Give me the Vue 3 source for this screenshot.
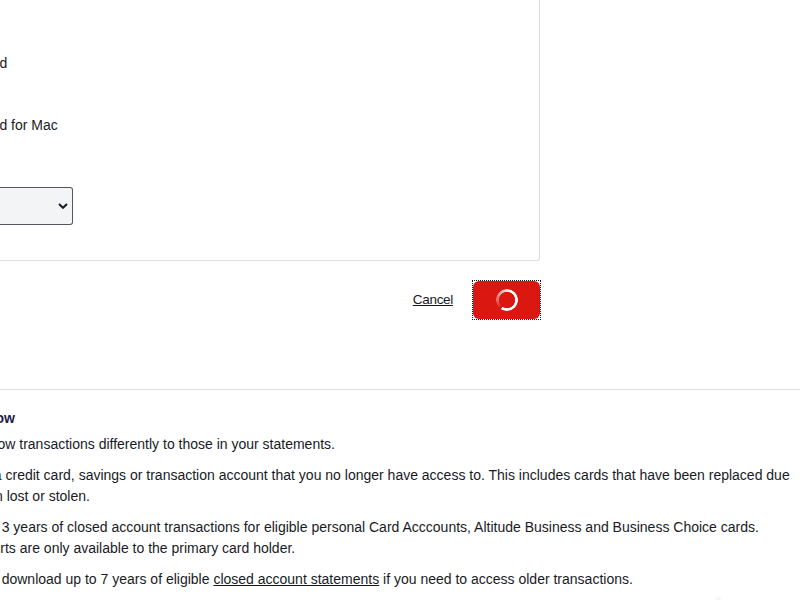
<script setup>
const notes = [
  { lines: [{ text: 'ow transactions differently to those in your statements.', shift: -2.5 }] },
  {
    lines: [
      { text: 'a credit card, savings or transaction account that you no longer have access to. This includes cards that have been replaced due', shift: -6.2 },
      { text: 'n lost or stolen.', shift: -5 },
    ],
  },
  {
    lines: [
      { text: '3 years of closed account transactions for eligible personal Card Acccounts, Altitude Business and Business Choice cards.', shift: 1.7 },
      { text: 'rts are only available to the primary card holder.', shift: 0.3 },
    ],
  },
  {
    lines: [
      { text: 'download up to 7 years of eligible ', link: 'closed account statements', after: ' if you need to access older transactions.', shift: 1.7 },
    ],
  },
]
</script>

<template>
  <div class="page">
    <section class="panel">
      <div class="option">d</div>
      <div class="option">d for Mac</div>
      <div class="select">
        <svg class="chevron" viewBox="0 0 10 6" width="10" height="6">
          <path d="M1 1 L5 4.8 L9 1" fill="none" stroke="#181b25" stroke-width="2" />
        </svg>
      </div>
    </section>
    <div class="actions">
      <a class="cancel">Cancel</a>
      <div class="focus">
        <button class="submit" aria-label="Loading"><span class="spinner"></span></button>
      </div>
    </div>
    <section class="notes">
      <h2>ow</h2>
      <p v-for="(note, i) in notes" :key="i">
        <span v-for="(line, j) in note.lines" :key="j" class="line" :style="{ marginLeft: line.shift + 'px' }">{{ line.text }}<a v-if="line.link">{{ line.link }}</a>{{ line.after }}</span>
      </p>
    </section>
    <div class="shade"></div>
  </div>
</template>

<style>
body { background: #fff; overflow: hidden; }
</style>

<style scoped>
.page {
  position: relative;
  width: 800px;
  height: 600px;
  overflow: hidden;
  box-sizing: border-box;
  font: 14px/21px "Liberation Sans", Arial, sans-serif;
  color: #181b25;
}
.panel {
  box-sizing: border-box;
  width: 540px;
  height: 261px;
  padding-top: 53px;
  border-right: 1px solid #dedede;
  border-bottom: 1px solid #dedede;
  border-bottom-right-radius: 3px;
}
.option { height: 21px; margin-bottom: 41px; margin-left: -0.6px; white-space: nowrap; }
.select {
  display: flex;
  align-items: center;
  justify-content: flex-end;
  box-sizing: border-box;
  width: 73px;
  height: 38px;
  margin-top: 10px;
  padding-right: 4px;
  background: #f3f4f6;
  border: 1px solid #575361;
  border-left: 0;
  border-radius: 0 3px 3px 0;
}
.option + .option { margin-bottom: 0; }
.option + .select { margin-top: 51px; }
.actions {
  display: flex;
  justify-content: flex-end;
  align-items: center;
  gap: 19px;
  width: 541px;
  height: 40px;
  margin-top: 19px;
}
.cancel { font-size: 13.5px; letter-spacing: -0.3px; margin-bottom: 2px; }
.cancel, .notes a { text-decoration: underline; }
.focus { border: 1px dotted #181b25; }
.submit {
  display: flex;
  align-items: center;
  justify-content: center;
  width: 67px;
  height: 38px;
  padding: 0;
  border: 0;
  border-radius: 6px;
  background: #da1710;
}
.spinner {
  width: 22px;
  height: 22px;
  border-radius: 50%;
  background: conic-gradient(from 216deg, rgba(255,255,255,0) 0deg, rgba(255,255,255,.25) 35deg, #fff 170deg, #fff 355deg, rgba(255,255,255,0) 360deg);
  mask: radial-gradient(circle closest-side, transparent 7.8px, #000 8.5px);
}
.notes {
  margin-top: 69px;
  padding-top: 18px;
  border-top: 1px solid #dedede;
}
h2 { margin: 0 0 5px -4.6px; font-size: 14px; line-height: 21px; color: #1f1c4f; }
p { margin: 0 0 10px; }
.line { display: block; white-space: pre; }
.shade {
  position: absolute;
  left: 714px;
  top: 595px;
  width: 9px;
  height: 10px;
  background: radial-gradient(closest-side, #f2f2f2, #fff);
}
</style>
